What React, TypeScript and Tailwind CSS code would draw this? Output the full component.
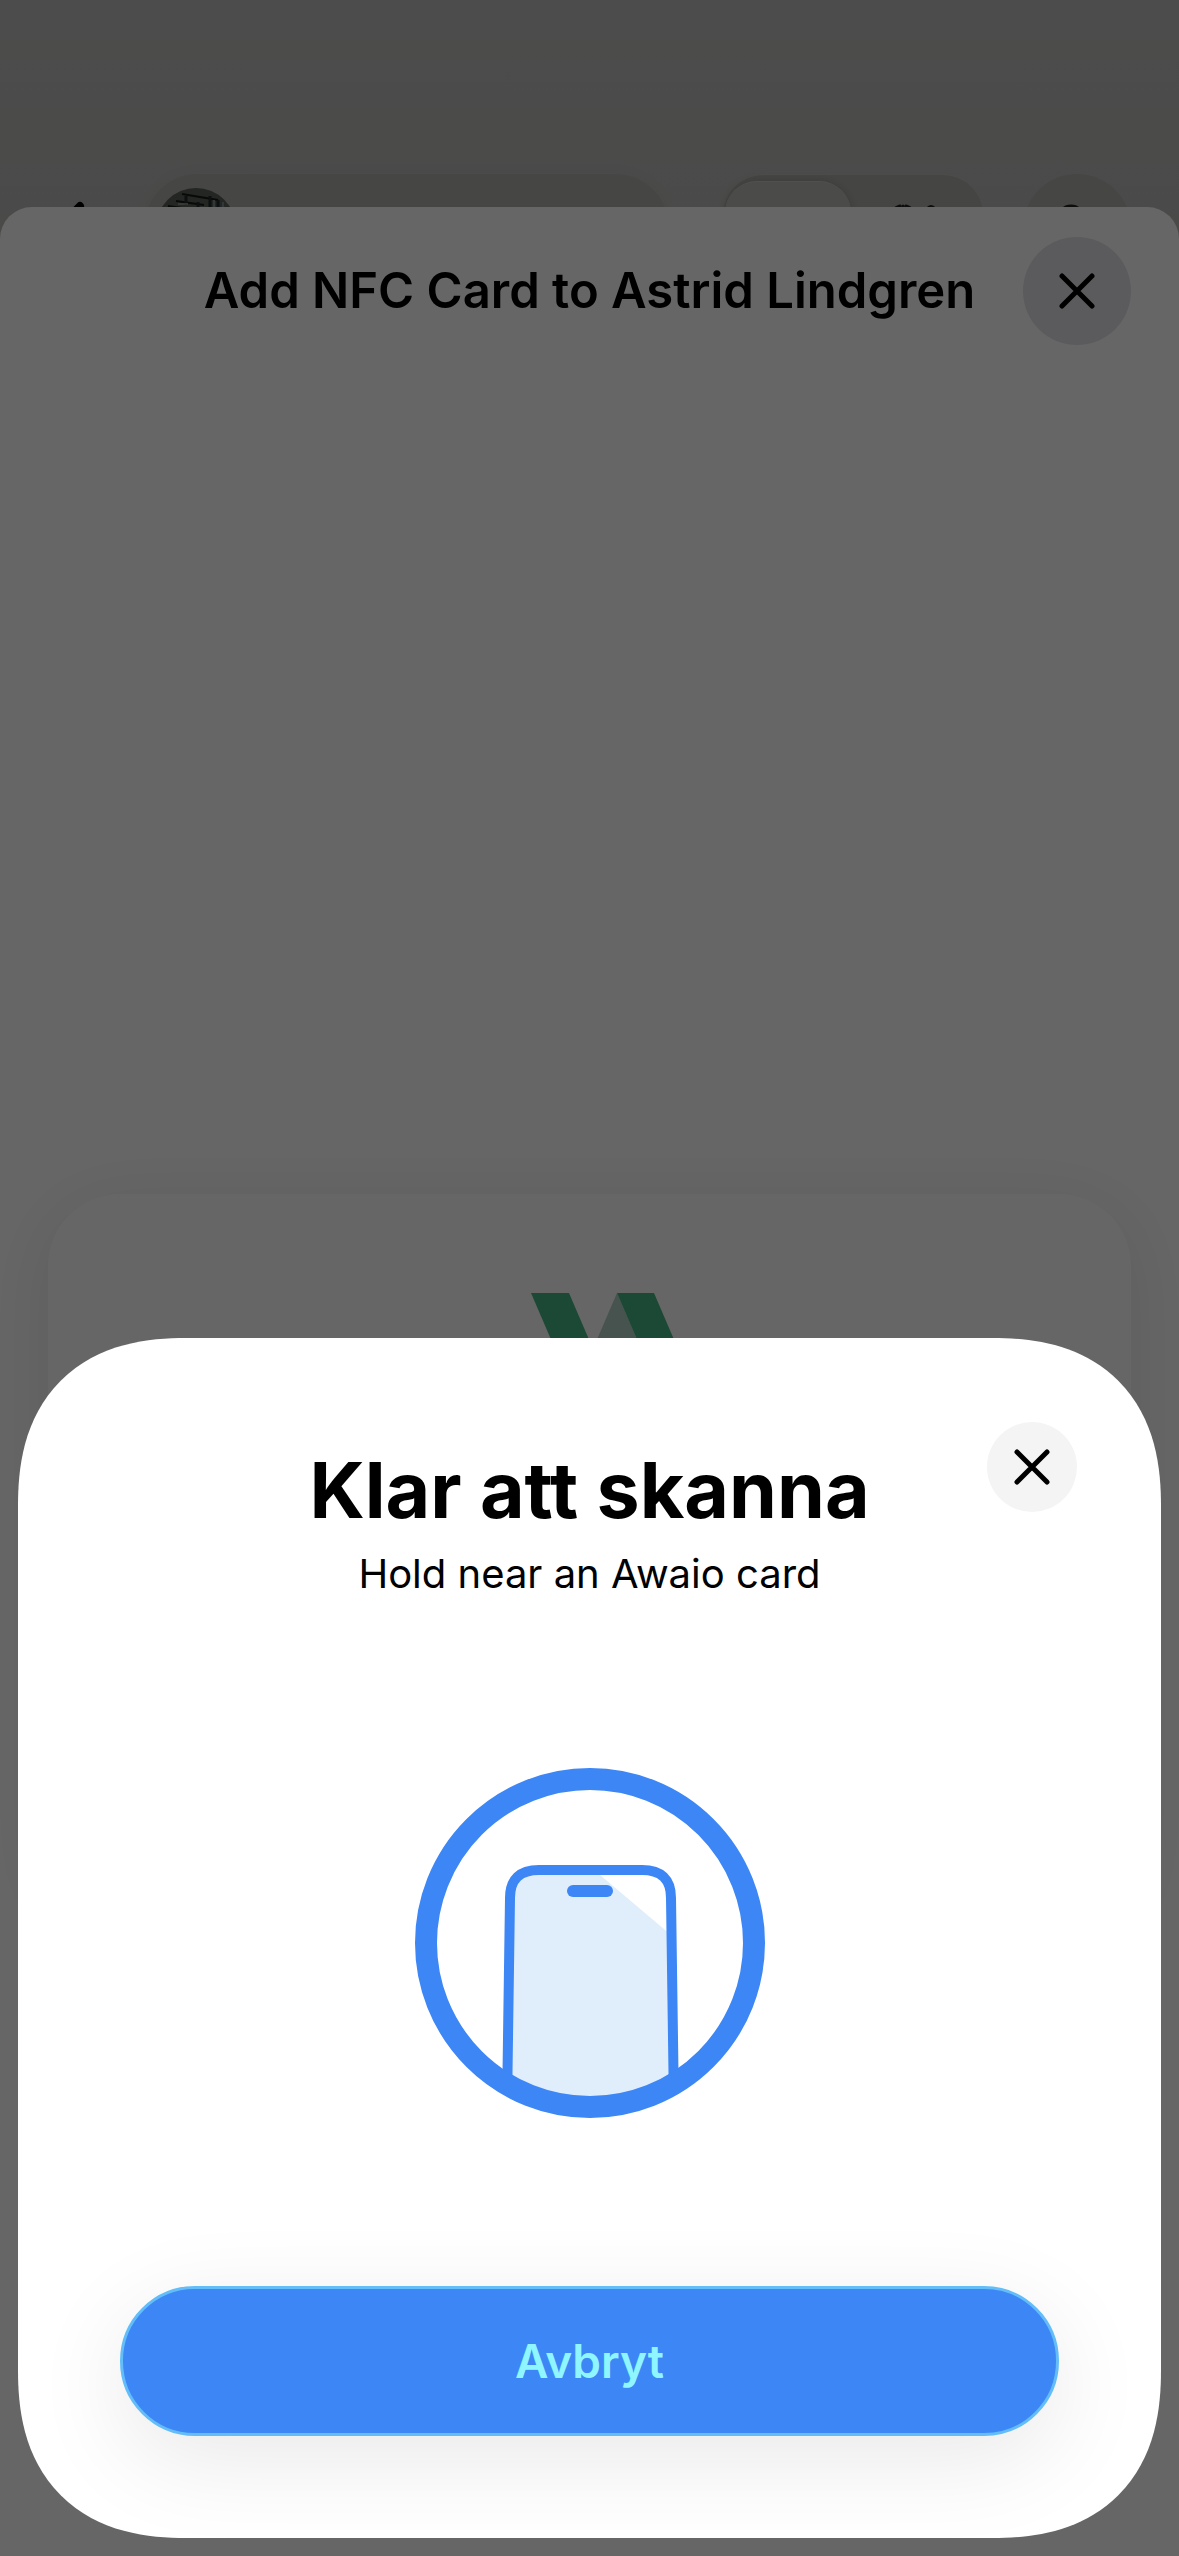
import React from 'react';

interface CloseIconProps {
  className: string;
  strokeWidth: number;
}

const CloseIcon: React.FC<CloseIconProps> = ({ className, strokeWidth }) => (
  <svg viewBox="0 0 36 36" className={className} fill="none" stroke="currentColor" strokeWidth={strokeWidth} strokeLinecap="round" aria-hidden="true">
    <path d="M3 3 33 33M33 3 3 33" />
  </svg>
);

const AppHeader: React.FC = () => (
  <header className="absolute inset-x-0 top-0 flex items-start bg-gradient-to-b from-[#bebebe] to-[#b8b8b5] pt-[174px] pr-12 pb-8 pl-10">
    <button type="button" aria-label="Back" className="flex h-[108px] w-[104px] items-center text-black">
      <svg viewBox="0 0 60 60" className="h-15 w-15" fill="none" stroke="currentColor" strokeWidth="8" strokeLinecap="round" strokeLinejoin="round">
        <path d="M40 8 18 30 40 52" />
      </svg>
    </button>

    <div className="mr-[54px] flex h-[108px] flex-1 items-center rounded-full bg-[#afafab] px-3 shadow-[0_0_16px_rgba(0,0,0,0.04)]">
      <svg viewBox="0 0 80 80" className="h-20 w-20 rounded-full" aria-hidden="true">
        <rect width="80" height="80" fill="#5b5f58" />
        <path d="M26 6 62 12M20 13 48 17M12 18 46 23M8 24 44 28" stroke="#151915" strokeWidth="2" />
        <path d="M30 8v9M42 14v14M54 8v26M62 12v24" stroke="#20292b" strokeWidth="3" />
        <path d="M58 12v22M67 14v20" stroke="#7d8b91" strokeWidth="2" />
        <path d="M22 16h10M30 25h12" stroke="#9a9f97" strokeWidth="1.5" />
      </svg>
    </div>

    <div className="mr-10 flex h-[108px] w-[260px] rounded-[40px] border-t border-[#bfbfbb] bg-[#adada9] p-[6px] pl-0.5">
      <button type="button" aria-label="List" className="flex-1 rounded-[32px] border-t border-[#c8c8c4] bg-[#bbbbb7] shadow-[0_0_8px_rgba(0,0,0,0.15)]" />
      <button type="button" aria-label="People" className="flex flex-1 items-start justify-center pt-[22px]">
        <svg viewBox="0 0 60 60" className="h-15 w-15" fill="none" stroke="#222" strokeWidth="3" strokeLinecap="round">
          <path d="M16 3c-3 1-5 2-6 4M22 3c3 1 5 2 6 4M19 3v6M44 5c2-2 4-2 6 0" />
        </svg>
      </button>
    </div>

    <button type="button" aria-label="Profile" className="flex h-[108px] w-[108px] items-center justify-center rounded-full bg-[#afafab]">
      <svg viewBox="0 0 60 60" className="h-15 w-15" fill="none" stroke="#222" strokeWidth="5">
        <circle cx="24" cy="21" r="12" />
        <path d="M6 56c2-24 34-24 36 0" />
      </svg>
    </button>
  </header>
);

const NfcSheet: React.FC = () => (
  <section className="relative mt-[207px] flex-1 rounded-t-[32px] bg-white px-12 pt-[30px]">
    <div className="grid grid-cols-[108px_1fr_108px] items-center">
      <h1 className="col-start-2 text-center text-[49px] leading-[60px] font-semibold whitespace-nowrap">
        Add NFC Card to Astrid Lindgren
      </h1>
      <button type="button" aria-label="Close" className="flex h-[108px] w-[108px] items-center justify-center rounded-full bg-[#e4e4e9]">
        <CloseIcon className="h-9 w-9" strokeWidth={5} />
      </button>
    </div>

    <div className="mt-[849px] flex h-[720px] justify-center rounded-[72px] bg-white pt-[99px] shadow-[0_12px_72px_rgba(0,0,0,0.09)]">
      <svg viewBox="0 0 200 100" className="h-[100px] w-[200px]" aria-hidden="true">
        <path d="M127 0 84 100H170Z" fill="#b0d0c2" />
        <path d="M41 0H79L122 100H84Z" fill="#46b487" />
        <path d="M127 0H164L207 100H170Z" fill="#46b487" />
      </svg>
    </div>
  </section>
);

const PhoneInRing: React.FC = () => (
  <svg viewBox="0 0 350 350" className="h-[350px] w-[350px]" fill="none" aria-hidden="true">
    <clipPath id="ring">
      <circle cx="175" cy="175" r="164" />
    </clipPath>
    <g clipPath="url(#ring)">
      <path d="M92 340 95 130Q95 101 124 101H178L256 167 258 340Z" fill="#e0eefc" />
      <path d="M92 340 95 130C95 111 105 102 124 102H227C246 102 256 111 256 130L259 340" stroke="#3c86f6" strokeWidth="10" />
      <rect x="152" y="117" width="46" height="12" rx="6" fill="#3c86f6" />
    </g>
    <circle cx="175" cy="175" r="164" stroke="#3c86f6" strokeWidth="22" />
  </svg>
);

const ScanDialog: React.FC = () => (
  <div
    role="dialog"
    aria-labelledby="scan-title"
    className="absolute inset-x-[18px] bottom-[18px] flex flex-col items-center overflow-hidden rounded-[144px] bg-white px-[102px] pt-[104px] pb-[102px] supports-[corner-shape:squircle]:rounded-[168px] supports-[corner-shape:squircle]:[corner-shape:superellipse(1.24)]"
  >
    <button type="button" aria-label="Close" className="absolute top-[84px] right-[84px] flex h-[90px] w-[90px] items-center justify-center rounded-full bg-[#f4f4f4]">
      <CloseIcon className="h-9 w-9" strokeWidth={5} />
    </button>
    <h2 id="scan-title" className="text-[77px] leading-[96px] font-bold">Klar att skanna</h2>
    <p className="mt-2 text-[40px] leading-[56px]">Hold near an Awaio card</p>
    <div className="mt-[166px] mb-[168px]">
      <PhoneInRing />
    </div>
    <button
      type="button"
      className="h-[150px] w-full rounded-full border-[3px] border-[#62bdf8] bg-[#3c86f6] text-[46px] font-semibold text-[#8ff6ff] shadow-[0_24px_96px_rgba(0,0,0,0.09)]"
    >
      Avbryt
    </button>
  </div>
);

const App: React.FC = () => {
  return (
    <main className="relative flex min-h-screen flex-col overflow-hidden bg-[#b9b9b6] font-['Inter','Liberation_Sans',sans-serif] text-black [font-variant-ligatures:none]">
      <AppHeader />
      <NfcSheet />
      <div className="absolute inset-0 bg-black/60" />
      <ScanDialog />
    </main>
  );
};

export default App;
